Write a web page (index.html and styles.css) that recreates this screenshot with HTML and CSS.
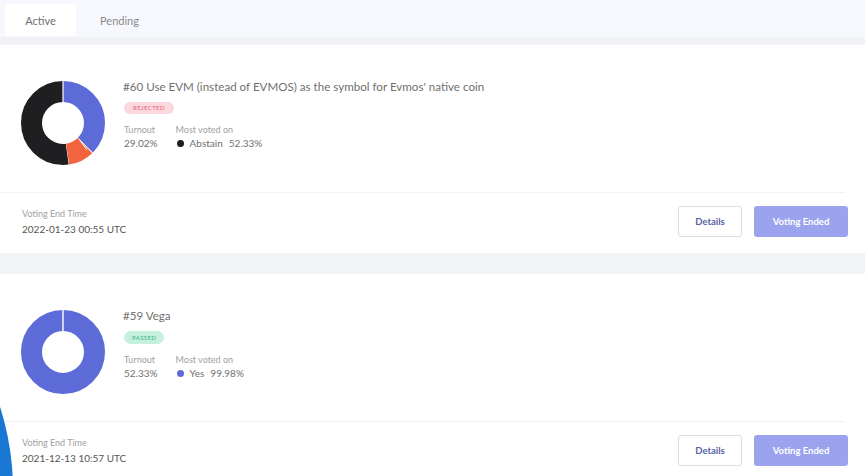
FILE: index.html
```html
<!DOCTYPE html>
<html lang="en">

<head>
  <meta charset="UTF-8">
  <meta name="viewport" content="width=device-width, initial-scale=1.0">
  <title>Proposals</title>
  <link rel="stylesheet" href="styles.css">
</head>

<body>
  <div id="tabs-bar">
    <div class="tab tab-active">Active</div>
    <div class="tab">Pending</div>
  </div>

  <div id="proposal-list">
    <div class="proposal-card">
      <div class="proposal-top">
        <svg class="donut" width="84" height="84" viewBox="0 0 84 84">
          <g transform="rotate(-90 42 42)">
            <circle cx="42" cy="42" r="31.5" fill="none" stroke="#1f1f22" stroke-width="21" stroke-dasharray="103.3 197.9" stroke-dashoffset="-94.5"></circle>
            <circle cx="42" cy="42" r="31.5" fill="none" stroke="#5c6bd8" stroke-width="21" stroke-dasharray="73.8 197.9" stroke-dashoffset="0"></circle>
            <circle cx="42" cy="42" r="31.5" fill="none" stroke="#f2643e" stroke-width="21" stroke-dasharray="19.5 197.9" stroke-dashoffset="-74.6"></circle>
          </g>
          <line x1="42" y1="0" x2="42" y2="22" stroke="#fff" stroke-width="1.2"></line>
          <line x1="66" y1="69" x2="58" y2="58" stroke="#fff" stroke-width="1"></line>
        </svg>
        <div class="proposal-info">
          <p class="proposal-title">#60 Use EVM (instead of EVMOS) as the symbol for Evmos' native coin</p>
          <span class="badge badge-rejected">Rejected</span>
          <div class="stats">
            <div class="stat">
              <span class="stat-label">Turnout</span>
              <span class="stat-value">29.02%</span>
            </div>
            <div class="stat">
              <span class="stat-label">Most voted on</span>
              <span class="stat-value"><i class="dot dot-black"></i>Abstain <b>52.33%</b></span>
            </div>
          </div>
        </div>
      </div>
      <div class="proposal-footer">
        <div class="end-time">
          <span class="end-label">Voting End Time</span>
          <span class="end-value">2022-01-23 00:55 UTC</span>
        </div>
        <div class="actions">
          <button class="btn btn-details">Details</button>
          <button class="btn btn-ended">Voting Ended</button>
        </div>
      </div>
    </div>

    <div class="proposal-card">
      <div class="proposal-top">
        <svg class="donut" width="84" height="84" viewBox="0 0 84 84">
          <circle cx="42" cy="42" r="31.5" fill="none" stroke="#5c6bd8" stroke-width="21"></circle>
          <line x1="42" y1="0" x2="42" y2="22" stroke="#fff" stroke-width="1.4"></line>
        </svg>
        <div class="proposal-info">
          <p class="proposal-title">#59 Vega</p>
          <span class="badge badge-passed">Passed</span>
          <div class="stats">
            <div class="stat">
              <span class="stat-label">Turnout</span>
              <span class="stat-value">52.33%</span>
            </div>
            <div class="stat">
              <span class="stat-label">Most voted on</span>
              <span class="stat-value"><i class="dot dot-blue"></i>Yes <b>99.98%</b></span>
            </div>
          </div>
        </div>
      </div>
      <div class="proposal-footer">
        <div class="end-time">
          <span class="end-label">Voting End Time</span>
          <span class="end-value">2021-12-13 10:57 UTC</span>
        </div>
        <div class="actions">
          <button class="btn btn-details">Details</button>
          <button class="btn btn-ended">Voting Ended</button>
        </div>
      </div>
    </div>
  </div>

  <div class="corner-blob"></div>
</body>

</html>
```

FILE: styles.css
```css
body {
  background-color: #f3f4f8;
  color: #666;
  font-family: 'Lato', 'Open Sans', sans-serif;
  margin: 0;
  height: 476px;
  overflow: hidden;
  position: relative;
}

#tabs-bar {
  background-color: #f7f8fd;
  display: flex;
  align-items: center;
  height: 45px;
  padding: 5px 0 0 5px;
  box-sizing: border-box;
  border-bottom: 8px solid #f1f2f6;
}

.tab {
  font-size: 11px;
  color: #8a8a8a;
  height: 32px;
  display: flex;
  align-items: center;
  justify-content: center;
  width: 71px;
  margin-top: -2px;
}

.tab-active {
  background-color: #fff;
  color: #707070;
  border-radius: 3px 3px 0 0;
  margin-right: 8px;
}

#proposal-list {
  display: flex;
  flex-direction: column;
  gap: 21px;
}

.proposal-card {
  background-color: #fff;
}

.proposal-top {
  display: flex;
  align-items: flex-start;
  padding: 36px 0 0 21px;
  height: 148px;
  box-sizing: border-box;
  border-bottom: 1px solid #f1f2f5;
  margin-right: 20px;
}

.donut {
  flex-shrink: 0;
}

.proposal-info {
  margin-left: 18px;
  margin-top: -1px;
}

.proposal-title {
  font-size: 11.6px;
  color: #707070;
  margin: 0;
  line-height: 14px;
}

.badge {
  display: inline-block;
  margin-top: 8px;
  font-size: 6px;
  text-transform: uppercase;
  letter-spacing: 0.4px;
  padding: 0 9px;
  height: 12px;
  line-height: 12px;
  border-radius: 7px;
  margin-left: 1px;
}

.badge-rejected {
  background-color: #fcd8de;
  color: #e5627a;
}

.badge-passed {
  background-color: #c6f0de;
  color: #35b283;
  padding: 0 8px;
  height: 13px;
  line-height: 13px;
}

.stats {
  display: flex;
  gap: 18px;
  margin-top: 9px;
  margin-left: 1px;
}

.stat {
  display: flex;
  flex-direction: column;
}

.stat-label {
  font-size: 9px;
  color: #a0a0a0;
  line-height: 13px;
}

.stat-value {
  font-size: 10px;
  color: #707070;
  line-height: 15px;
  display: flex;
  align-items: center;
}

.stat-value b {
  font-weight: normal;
  margin-left: 6px;
}

.dot {
  width: 7px;
  height: 7px;
  border-radius: 50%;
  margin: 0 6px 0 1px;
}

.dot-black {
  background-color: #1f1f22;
}

.dot-blue {
  background-color: #5c6bd8;
}

.proposal-footer {
  display: flex;
  justify-content: space-between;
  align-items: center;
  height: 60px;
  padding: 0 17px 3px 22px;
  box-sizing: border-box;
}

.end-time {
  display: flex;
  flex-direction: column;
}

.end-label {
  font-size: 9px;
  color: #a0a0a0;
  line-height: 14px;
}

.end-value {
  font-size: 10px;
  color: #555;
  line-height: 16px;
}

.actions {
  display: flex;
  gap: 12px;
}

.btn {
  font-family: 'Lato', 'Open Sans', sans-serif;
  font-size: 9.5px;
  font-weight: bold;
  height: 31px;
  border-radius: 3px;
  cursor: pointer;
}

.btn-details {
  background-color: #fff;
  color: #5862a6;
  border: 1px solid #dcdde3;
  width: 64px;
}

.btn-ended {
  background-color: #9ba3ee;
  color: #fff;
  border: none;
  width: 94px;
}

.corner-blob {
  position: absolute;
  left: -533px;
  top: 217px;
  width: 546px;
  height: 546px;
  border-radius: 50%;
  background-color: #1976d2;
  pointer-events: none;
}
```
